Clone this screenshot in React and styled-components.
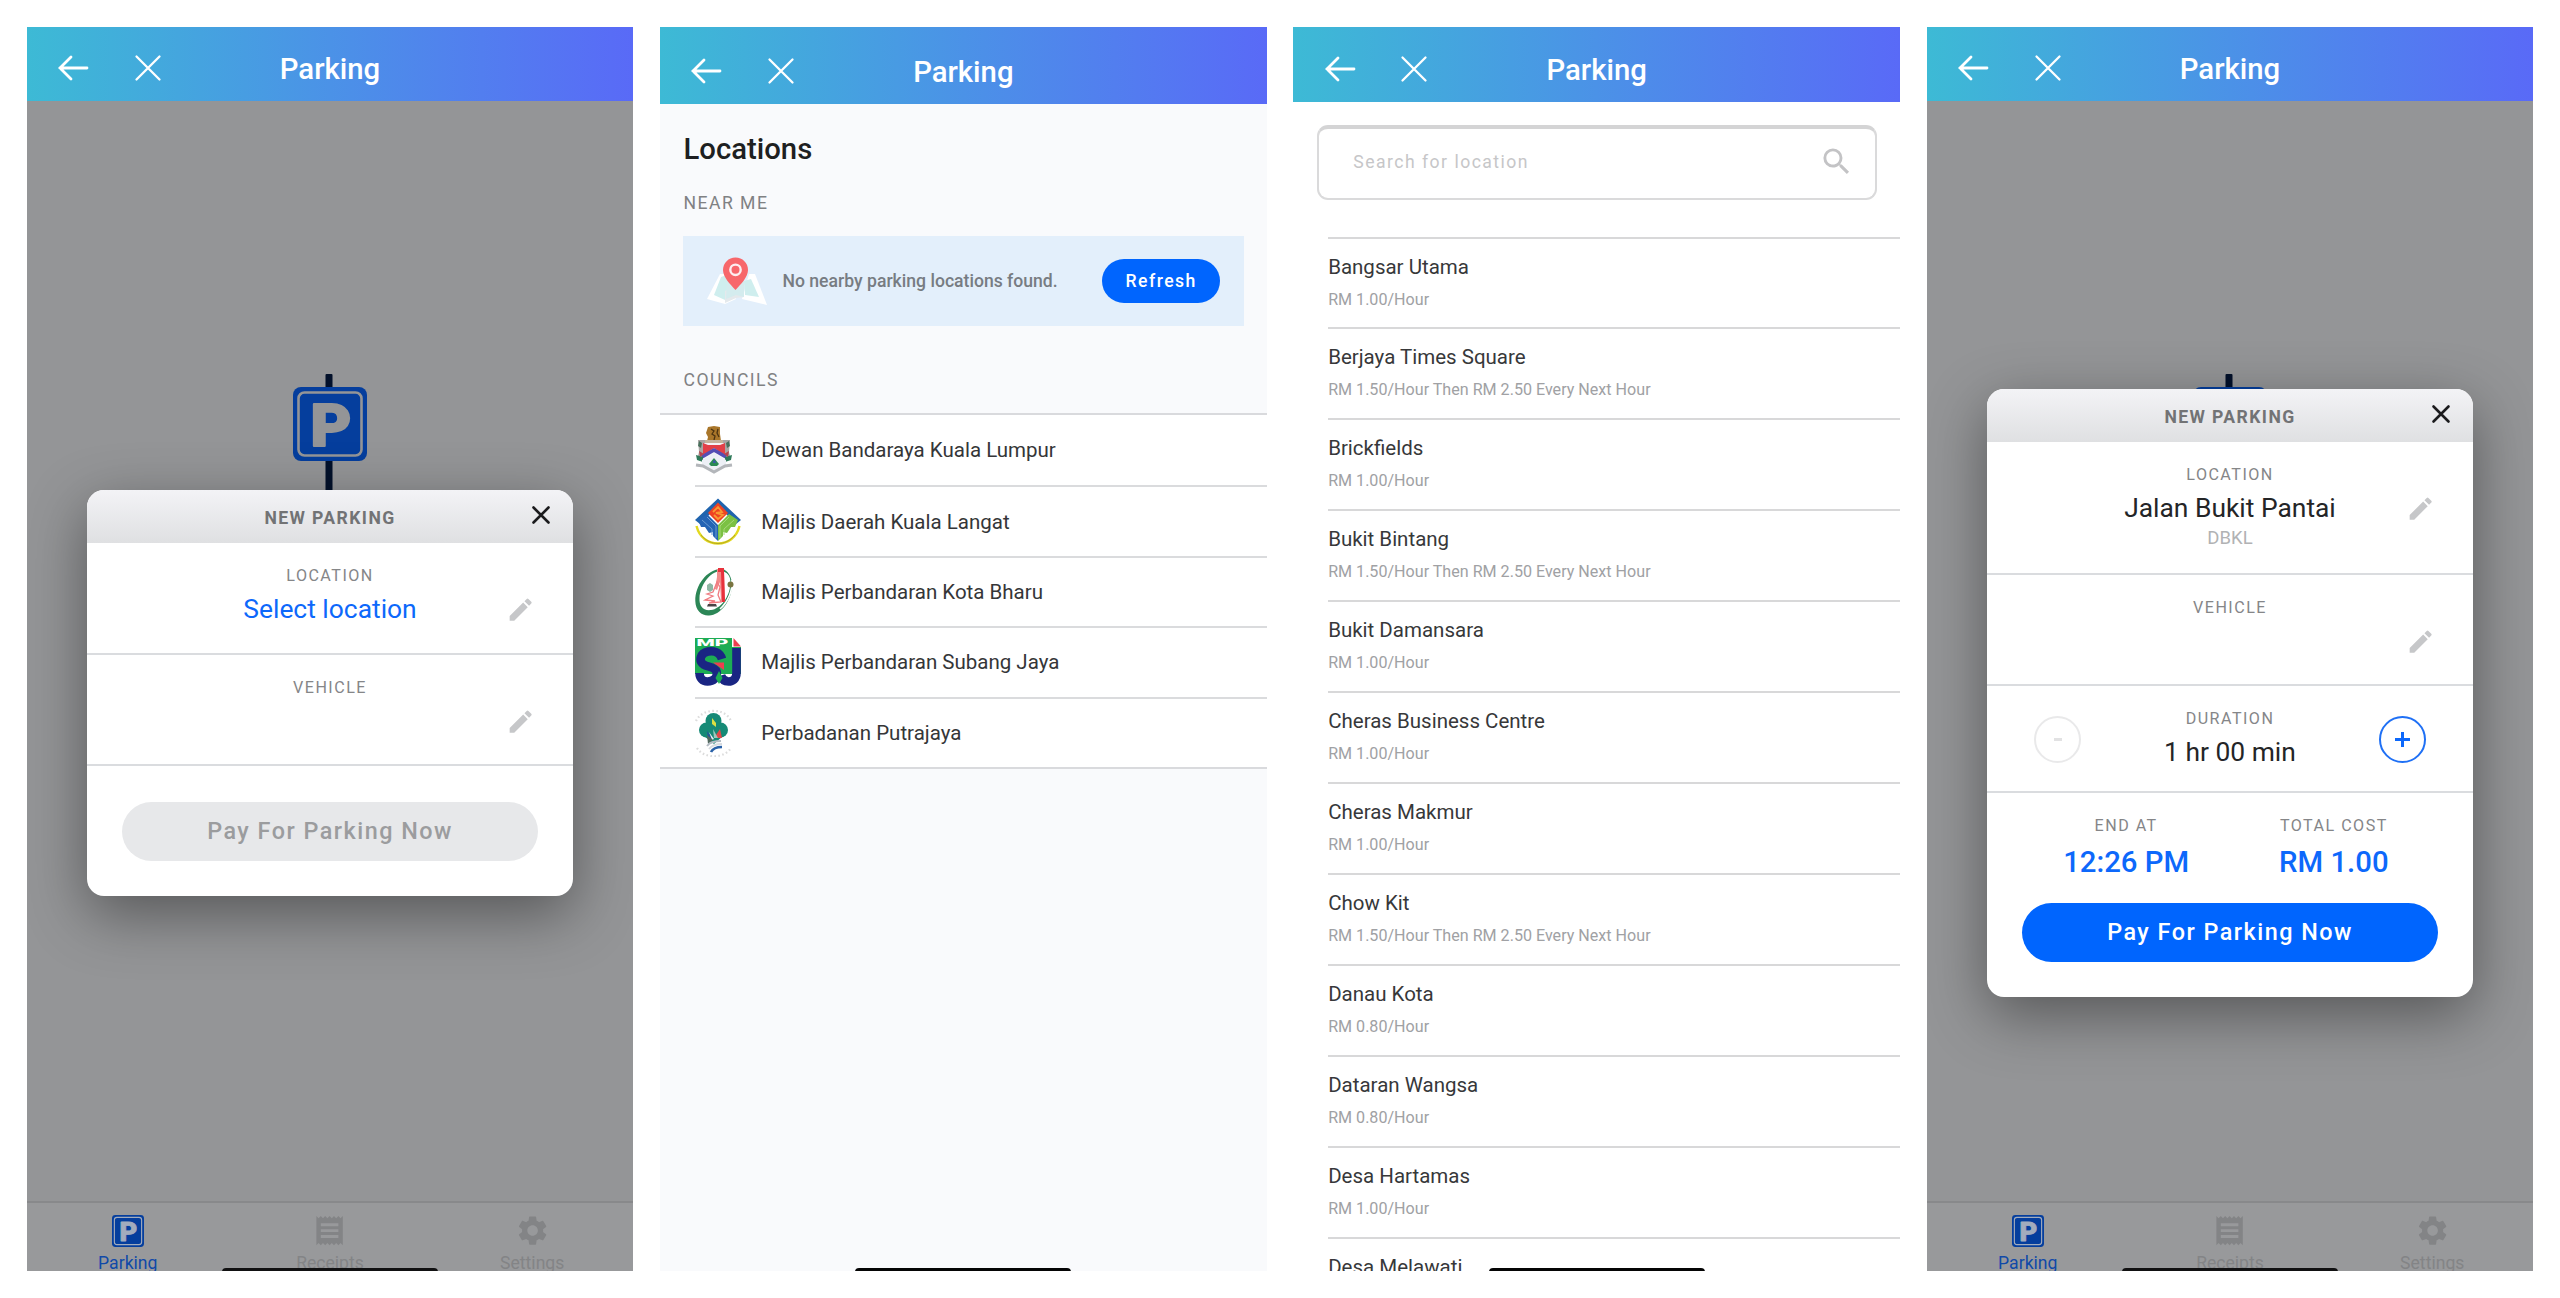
import React from "react";
import styled, { createGlobalStyle } from "styled-components";
import { MdEdit, MdReceipt, MdSearch, MdSettings } from "react-icons/md";

const GlobalStyle = createGlobalStyle`
  * {
    box-sizing: border-box;
  }
  body {
    margin: 0;
    background-color: #ffffff;
    font-family: Roboto, "Liberation Sans", sans-serif;
  }
`;

const Board = styled.div`
  display: grid;
  grid-template-columns: repeat(4, 1fr);
  gap: 26.67px;
  height: 1298px;
  padding: 27px 26.67px;
`;

const Screen = styled.div`
  position: relative;
  display: flex;
  flex-direction: column;
  height: 1244px;
  overflow: hidden;
  background-color: ${(props) => props.$bg};
`;

const HeaderBar = styled.div`
  display: flex;
  flex-shrink: 0;
  align-items: flex-end;
  height: ${(props) => props.$height}px;
  background: linear-gradient(90deg, #3dbad5 0%, #4b92e7 50%, #596af7 100%);
`;

const HeaderRow = styled.div`
  display: grid;
  grid-template-columns: 200px 1fr 200px;
  align-items: center;
  width: 100%;
  height: 65px;
`;

const HeaderIcons = styled.div`
  display: flex;
  gap: 44.5px;
  padding-left: 30.5px;
  padding-bottom: 2px;
`;

const HeaderTitle = styled.div`
  color: #ffffff;
  font-size: 29.3px;
  font-weight: 500;
  text-align: center;
`;

const HomeBar = styled.div`
  position: absolute;
  left: 195.5px;
  bottom: -5px;
  width: 216px;
  height: 8px;
  border-radius: 4px;
  background-color: ${(props) => (props.$dim ? "#111112" : "#050505")};
`;

const Label = styled.div`
  color: #858688;
  font-size: 16.1px;
  letter-spacing: 1.47px;
  line-height: 24px;
`;

/* parking home */

const SignArea = styled.div`
  display: flex;
  flex: 1;
  justify-content: center;
  padding-top: 273px;
`;

const TabBar = styled.div`
  display: grid;
  grid-template-columns: repeat(3, 1fr);
  height: 70px;
  border-top: 2px solid #88898b;
  background-color: #98999b;
`;

const Tab = styled.div`
  display: flex;
  flex-direction: column;
  align-items: center;
  padding-top: 9px;
  color: ${(props) => (props.$active ? "#1049a8" : "#838486")};
  font-size: 17.6px;
`;

const TabIcon = styled.div`
  display: flex;
  align-items: center;
  height: 37px;
  margin-bottom: 4px;
`;

/* new parking dialog */

const Overlay = styled.div`
  position: absolute;
  inset: 0;
  display: flex;
  align-items: center;
  justify-content: center;
  padding-top: 88px;
`;

const DialogBox = styled.div`
  width: 485.4px;
  border-radius: 17px;
  overflow: hidden;
  background-color: #ffffff;
  box-shadow: 0 18px 60px rgba(0, 0, 0, 0.42);
`;

const DialogHeader = styled.div`
  display: grid;
  grid-template-columns: 64px 1fr 64px;
  align-items: center;
  height: 53px;
  background: linear-gradient(180deg, #f3f3f6 0%, #dfe0e2 100%);
`;

const DialogTitle = styled.div`
  grid-column: 2;
  padding-top: 3px;
  color: #727375;
  font-size: 17.6px;
  font-weight: 700;
  letter-spacing: 1.4px;
  text-align: center;
`;

const DialogClose = styled.div`
  display: flex;
  justify-content: center;
  padding-bottom: 3px;
`;

const Section = styled.div`
  display: grid;
  grid-template-columns: 104px 1fr 104px;
  height: ${(props) => props.$height}px;
  padding-top: 21px;
  border-bottom: 2px solid #dadcdf;
  text-align: center;
`;

const SectionBody = styled.div`
  grid-column: 2;
  white-space: nowrap;
`;

const Value = styled.div`
  color: ${(props) => (props.$link ? "#0d68fb" : "#242527")};
  font-size: 26.4px;
  line-height: 42px;
`;

const Council = styled.div`
  color: #b1b2b4;
  font-size: 18.5px;
  line-height: 18px;
`;

const EditIcon = styled(MdEdit)`
  margin: 31px auto 0;
  color: #c6c7c9;
  font-size: 29.3px;
`;

const StepButton = styled.div`
  display: flex;
  align-items: center;
  justify-content: center;
  width: 47px;
  height: 47px;
  margin-top: 9px;
  margin-left: ${(props) => (props.$minus ? "47px" : "10px")};
  border: 2px solid ${(props) => (props.$minus ? "#e9e9ea" : "#1f70f5")};
  border-radius: 50%;
`;

const Summary = styled.div`
  display: grid;
  grid-template-columns: 1fr 1fr;
  padding: 21px 35px 17px;
  text-align: center;
`;

const SummaryValue = styled.div`
  color: #0d68fb;
  font-size: 29.3px;
  font-weight: 500;
  line-height: 48px;
`;

const PayButton = styled.div`
  height: 59px;
  margin: ${(props) => (props.$disabled ? "36px" : "0")} 35px 35px;
  border-radius: 30px;
  background-color: ${(props) => (props.$disabled ? "#e7e8ea" : "#0065fe")};
  color: ${(props) => (props.$disabled ? "#9b9c9e" : "#ffffff")};
  font-size: 23.4px;
  font-weight: 500;
  letter-spacing: 1.47px;
  line-height: 58px;
  text-align: center;
`;

/* locations */

const PageTitle = styled.div`
  margin: 27px 23.5px 0;
  color: #1e1f21;
  font-size: 29.3px;
  font-weight: 500;
  line-height: 36px;
`;

const GroupTitle = styled.div`
  margin: ${(props) => props.$top}px 23.5px 0;
  color: #808183;
  font-size: 17.6px;
  letter-spacing: 1.47px;
  line-height: 24px;
`;

const Notice = styled.div`
  display: flex;
  align-items: center;
  height: 90px;
  margin: 21px 23px 0 23.5px;
  padding: 0 23.5px 0 24px;
  background-color: #e3effb;
`;

const NoticeText = styled.div`
  flex: 1;
  margin-left: 15px;
  color: #777c82;
  font-size: 17.6px;
  font-weight: 500;
`;

const RefreshButton = styled.div`
  width: 118px;
  height: 44px;
  border-radius: 22px;
  background-color: #0065fe;
  color: #ffffff;
  font-size: 17.6px;
  font-weight: 500;
  letter-spacing: 1.47px;
  line-height: 44px;
  text-align: center;
`;

const CouncilList = styled.div`
  margin-top: 21px;
  padding-left: 35px;
  border-top: 2px solid #d9dadd;
  border-bottom: 2px solid #d9dadd;
  background-color: #ffffff;
`;

const CouncilRow = styled.div`
  display: flex;
  align-items: center;
  gap: 18.3px;
  height: 70.4px;
  color: #353638;
  font-size: 20.5px;
  & + & {
    border-top: 2px solid #dadbdd;
  }
  svg {
    flex-shrink: 0;
  }
`;

/* search */

const SearchBox = styled.div`
  display: flex;
  flex-shrink: 0;
  align-items: center;
  justify-content: space-between;
  height: 75px;
  margin: 23px 23.5px 36.5px;
  padding: 0 20.5px 3px 34.5px;
  border: 2px solid #dadadb;
  border-top: 4px solid #d4d4d5;
  border-radius: 11px;
  color: #c6c6c8;
  font-size: 17.6px;
  letter-spacing: 1.47px;
  svg {
    color: #c3c3c5;
    font-size: 35.2px;
  }
`;

const LocationRow = styled.div`
  flex-shrink: 0;
  height: 90.95px;
  margin-left: 34.8px;
  padding-top: 16px;
  border-top: 2px solid #d8d8d9;
`;

const LocationName = styled.div`
  color: #37383a;
  font-size: 20.5px;
  line-height: 24px;
`;

const LocationRate = styled.div`
  margin-top: 10px;
  color: #a0a1a4;
  font-size: 16.1px;
  line-height: 22px;
`;

const councils = [
  { name: "Dewan Bandaraya Kuala Lumpur", Logo: KualaLumpurLogo },
  { name: "Majlis Daerah Kuala Langat", Logo: KualaLangatLogo },
  { name: "Majlis Perbandaran Kota Bharu", Logo: KotaBharuLogo },
  { name: "Majlis Perbandaran Subang Jaya", Logo: SubangJayaLogo },
  { name: "Perbadanan Putrajaya", Logo: PutrajayaLogo },
];

const locations = [
  { name: "Bangsar Utama", rate: "RM 1.00/Hour" },
  { name: "Berjaya Times Square", rate: "RM 1.50/Hour Then RM 2.50 Every Next Hour" },
  { name: "Brickfields", rate: "RM 1.00/Hour" },
  { name: "Bukit Bintang", rate: "RM 1.50/Hour Then RM 2.50 Every Next Hour" },
  { name: "Bukit Damansara", rate: "RM 1.00/Hour" },
  { name: "Cheras Business Centre", rate: "RM 1.00/Hour" },
  { name: "Cheras Makmur", rate: "RM 1.00/Hour" },
  { name: "Chow Kit", rate: "RM 1.50/Hour Then RM 2.50 Every Next Hour" },
  { name: "Danau Kota", rate: "RM 0.80/Hour" },
  { name: "Dataran Wangsa", rate: "RM 0.80/Hour" },
  { name: "Desa Hartamas", rate: "RM 1.00/Hour" },
  { name: "Desa Melawati", rate: "RM 1.00/Hour" },
];

function KualaLumpurLogo() {
  return (
    <svg width="48" height="48" viewBox="0 0 48 48">
      <path d="M13 1l6-1 6 1v7l1 7H12l1-4-2-4z" fill="#a9762a" />
      <path d="M16 3l3 2-2 3 3 2-1 4M23 3l-1 4 2 4" fill="none" stroke="#4d3311" strokeWidth="1.300" />
      <path d="M10 14h18v3H10z" fill="#c4b29c" />
      <path d="M3 14h7v9l-1 8-7 3 2-8zM35 14h-7v9l1 8 7 3-2-8z" fill="#aaa6a5" />
      <path d="M4 15l3 2-1 5-3-2zM34 15l-3 2 1 5 3-2z" fill="#49705c" />
      <path d="M9 17h20v14l-10 7-10-7z" fill="#f4f4f8" />
      <path d="M8 17l5 2h12l5-2v13L19 22 8 30z" fill="#e24048" />
      <path d="M7 31l12-7 12 7" fill="none" stroke="#544eb4" strokeWidth="3.600" />
      <path d="M1 29l7 2v5l-6-2zM37 29l-7 2v5l6-2z" fill="#2f7a5a" />
      <path d="M4 25l5 3-4 3zM34 25l-5 3 4 3z" fill="#b8434c" />
      <path d="M7 34l12-7 12 7v5l-12 7-12-7z" fill="#edf0f6" />
      <path d="M14 38l5-6 5 6-2 2h-6z" fill="#2c8a55" />
      <path d="M18 35l2-1 1 3h-3z" fill="#3b58a8" />
      <path d="M1 39l7 1 11 6 11-6 7-1" fill="none" stroke="#b3b6ba" strokeWidth="3" />
    </svg>
  );
}

function KualaLangatLogo() {
  return (
    <svg width="48" height="48" viewBox="0 0 48 48">
      <path d="M23 .5L46 22l-5 4-18-18L5 26l-5-4z" fill="#1f64ae" />
      <path d="M23 4.500l10 10.500-10 10-10-10z" fill="#ee4323" />
      <path d="M18 14l5-5 4 5-6 1 7 2-5 4-4-4" fill="none" stroke="#f89a32" strokeWidth="1.800" />
      <path d="M3 22l9-6 11 11v16l-5-5V34l-4 1-4-6-4 0z" fill="#2464b4" />
      <path d="M43 22l-9-6-11 11v16l5-5V34l4 1 4-6 4 0z" fill="#7bc143" />
      <path d="M7 22l10 9v6M12 19l9 9v12" fill="none" stroke="#6b9bd0" strokeWidth="1" />
      <path d="M39 22l-10 9v6M34 19l-9 9v12" fill="none" stroke="#a6d878" strokeWidth="1" />
      <path d="M1.500 28c3 12 12 17.500 21.500 17.500S41.500 40 44.500 28" fill="none" stroke="#e3d91f" strokeWidth="2.400" />
      <path d="M6 37c5 6 11 8.500 17 8.500S35 43 40 37" fill="none" stroke="#b5a824" strokeWidth="1" />
    </svg>
  );
}

function KotaBharuLogo() {
  return (
    <svg width="48" height="48" viewBox="0 0 48 48">
      <path
        fillRule="evenodd"
        d="M25 1C12 2 0 17 .3 33 .5 43 7 48 14 47.500 26 47 37 32 37 17 37 9 33 3 28 1zM25 3c7 0 11 5 10.500 13-1 13-10 25-19.500 26C8 43 4 38 4.500 30 5 17 15 4 25 3z"
        fill="#2c8656"
      />
      <path d="M37 12c1 10-4 22-12 29" fill="none" stroke="#ffffff" strokeWidth="1.600" />
      <path d="M22 1h7l1 33h-4l-1-20-3 8-2-1 2-12z" fill="#f28a8a" />
      <path d="M23 0h6v4h-6zM26 4h3l1 30h-3z" fill="#e8323c" />
      <path d="M22 14l-4 10-6 2 6 2-8 4 10 1-6 2 12-1-3-7 2-8z" fill="none" stroke="#ef7b80" strokeWidth="1.300" />
      <path d="M12 17l3-2 3 2v5l-3 2-3-2z" fill="#8fb7a4" />
      <path d="M13 36h8l1 2.500H12z" fill="#4a4446" />
      <circle cx="35.500" cy="16.500" r="3" fill="#7a7440" />
    </svg>
  );
}

const LogoText = styled.text`
  fill: #ffffff;
  font-family: Roboto, sans-serif;
  font-size: 8.5px;
  font-weight: 900;
`;

function SubangJayaLogo() {
  return (
    <svg width="48" height="48" viewBox="0 0 48 48">
      <path d="M0 0h37v9h9v27H0z" fill="#1dac54" />
      <path d="M38.500 0l7.500 8.500h-7.500z" fill="#ee3e50" />
      <path
        d="M27 21C25 14 18 12.500 13 13.500 5 15 3.500 23 8.500 26.500c4 3 11 1.500 13 7C23 40 18 43.500 12.500 43.500 7.500 43.500 4.500 40 4.500 35"
        fill="none"
        stroke="#1a2583"
        strokeWidth="8.600"
      />
      <path d="M41.500 10V35c0 6-4 8.500-8 8.500-4 0-6.500-2.500-7.500-6" fill="none" stroke="#1a2583" strokeWidth="8.600" />
      <path d="M24 33l3.500 7-3.500 6-3.500-6z" fill="#1dac54" />
      <path d="M18 24.500h11v7.500z" fill="#ee3e50" />
      <LogoText x="1.500" y="8" textLength="32" lengthAdjust="spacingAndGlyphs">
        MP
      </LogoText>
    </svg>
  );
}

function PutrajayaLogo() {
  return (
    <svg width="48" height="48" viewBox="0 0 48 48">
      <path d="M1 12C7-1 30-2 36 12" fill="none" stroke="#dcdcdc" strokeWidth="2.200" strokeDasharray="1.600 2.400" />
      <path d="M2 39c7 11 27 11 34 0" fill="none" stroke="#dcdcdc" strokeWidth="2.200" strokeDasharray="1.600 2.400" />
      <circle cx="18.500" cy="12" r="8" fill="#168a76" />
      <circle cx="11.500" cy="21" r="7.500" fill="#168a76" />
      <circle cx="25.500" cy="21" r="7.500" fill="#168a76" />
      <path d="M9 27l9-17 10 17-9 8z" fill="#168a76" />
      <path d="M17 9l4 5v4l-4-3z" fill="#dbe043" />
      <path d="M12 22l1 8h5z" fill="#27539b" />
      <path d="M14 23l5 7-2 1z" fill="#e5eef0" />
      <path d="M25 20l2 9h-8z" fill="#dd4a4a" />
      <path d="M18 20l5 9h-4z" fill="#9cc7bd" />
      <path d="M12 26l6 5-5 4z" fill="#52695f" />
      <path d="M12 37c3-4 7-5 14-5" fill="none" stroke="#b4bcc4" strokeWidth="2" />
      <path d="M14 40c3-4 7-5 13-5" fill="none" stroke="#d7dbdf" strokeWidth="1.800" />
      <path d="M16 43c2-4 6-5 11-5" fill="none" stroke="#2a62a8" strokeWidth="2.600" />
    </svg>
  );
}

function MapPin() {
  return (
    <svg width="60" height="49" viewBox="0 0 60 49">
      <path d="M13 17h7l9 25-11 5L0 42z" fill="#ffffff" />
      <path d="M48 17h-6l-7 25 25 6z" fill="#ffffff" />
      <path d="M14 20l6-2 8 22-10 3-11-5z" fill="#cfeeee" />
      <path d="M18 34l11-6 8 12-8 1-11 5z" fill="#e4e9ec" />
      <path d="M20 22l17-2v20l-8-2-10 4z" fill="#d4ecee" />
      <path d="M37 24l7-2 8 18-14-2z" fill="#cfeeee" />
      <path
        d="M28.500.500c7 0 12.500 5.500 12.500 12.500 0 7-7 14-12.500 20C23 27 16 20 16 13 16 6 21.500.500 28.500.500z"
        fill="#f7676b"
      />
      <circle cx="28.500" cy="12.800" r="5.200" fill="none" stroke="#fdeef0" strokeWidth="2.400" />
    </svg>
  );
}

const SignLetter = styled.text`
  fill: ${(props) => props.$color};
  stroke: ${(props) => props.$color};
  stroke-width: 2px;
  stroke-linejoin: round;
  font-family: Roboto, sans-serif;
  font-size: 60px;
  font-weight: 900;
`;

function ParkingPlate({ ring, blank }) {
  return (
    <>
      <rect x="0" y="0" width="74" height="74" rx="8" fill="#053e9d" />
      <rect x="5.500" y="5.500" width="63" height="63" rx="6" fill="none" stroke={ring} strokeWidth="2.600" />
      {!blank && (
        <SignLetter $color={ring} x="17.500" y="59" textLength="41" lengthAdjust="spacingAndGlyphs">
          P
        </SignLetter>
      )}
    </>
  );
}

function ParkingSign({ blank }) {
  return (
    <svg width="74" height="160" viewBox="0 0 74 160">
      <rect x="32.500" y="0" width="7" height="160" rx="1" fill="#03112b" />
      <g transform="translate(0 13)">
        <ParkingPlate ring="#949597" blank={blank} />
      </g>
    </svg>
  );
}

function Header({ height }) {
  return (
    <HeaderBar $height={height}>
      <HeaderRow>
        <HeaderIcons>
          <svg width="32" height="28" viewBox="0 0 32 28" fill="none" stroke="#ffffff" strokeWidth="2.800" strokeLinecap="round">
            <path d="M3 14h27M14 3L3 14l11 11" />
          </svg>
          <svg width="28" height="28" viewBox="0 0 28 28" fill="none" stroke="#ffffff" strokeWidth="2.300" strokeLinecap="round">
            <path d="M2.500 2.500l23 23M25.500 2.500l-23 23" />
          </svg>
        </HeaderIcons>
        <HeaderTitle>Parking</HeaderTitle>
      </HeaderRow>
    </HeaderBar>
  );
}

function Dialog({ children }) {
  return (
    <Overlay>
      <DialogBox>
        <DialogHeader>
          <DialogTitle>NEW PARKING</DialogTitle>
          <DialogClose>
            <svg width="20" height="20" viewBox="0 0 20 20" fill="none" stroke="#1b1b1d" strokeWidth="2.600" strokeLinecap="round">
              <path d="M2.500 2.500l15 15M17.500 2.500l-15 15" />
            </svg>
          </DialogClose>
        </DialogHeader>
        {children}
      </DialogBox>
    </Overlay>
  );
}

// blankSign leaves the letter off the plate when the dialog covers it
function ParkingScreen({ children, blankSign }) {
  return (
    <Screen $bg="#949597">
      <Header height={74} />
      <SignArea>
        <ParkingSign blank={blankSign} />
      </SignArea>
      <TabBar>
        <Tab $active>
          <TabIcon>
            <svg width="32" height="32" viewBox="0 0 74 74">
              <ParkingPlate ring="#a2acbd" />
            </svg>
          </TabIcon>
          Parking
        </Tab>
        <Tab>
          <TabIcon>
            <MdReceipt size={35.2} />
          </TabIcon>
          Receipts
        </Tab>
        <Tab>
          <TabIcon>
            <MdSettings size={35.2} />
          </TabIcon>
          Settings
        </Tab>
      </TabBar>
      {children}
      <HomeBar $dim />
    </Screen>
  );
}

function LocationsScreen() {
  return (
    <Screen $bg="#f9fafc">
      <Header height={77} />
      <PageTitle>Locations</PageTitle>
      <GroupTitle $top={24}>NEAR ME</GroupTitle>
      <Notice>
        <MapPin />
        <NoticeText>No nearby parking locations found.</NoticeText>
        <RefreshButton>Refresh</RefreshButton>
      </Notice>
      <GroupTitle $top={42}>COUNCILS</GroupTitle>
      <CouncilList>
        {councils.map(({ name, Logo }) => (
          <CouncilRow key={name}>
            <Logo />
            {name}
          </CouncilRow>
        ))}
      </CouncilList>
      <HomeBar />
    </Screen>
  );
}

function SearchScreen() {
  return (
    <Screen $bg="#ffffff">
      <Header height={75} />
      <SearchBox>
        Search for location
        <MdSearch />
      </SearchBox>
      {locations.map((location) => (
        <LocationRow key={location.name}>
          <LocationName>{location.name}</LocationName>
          <LocationRate>{location.rate}</LocationRate>
        </LocationRow>
      ))}
      <HomeBar />
    </Screen>
  );
}

const App = () => {
  return (
    <>
      <GlobalStyle />
      <Board>
        <ParkingScreen>
          <Dialog>
            <Section $height={112}>
              <SectionBody>
                <Label>LOCATION</Label>
                <Value $link>Select location</Value>
              </SectionBody>
              <EditIcon />
            </Section>
            <Section $height={111}>
              <SectionBody>
                <Label>VEHICLE</Label>
              </SectionBody>
              <EditIcon />
            </Section>
            <PayButton $disabled>Pay For Parking Now</PayButton>
          </Dialog>
        </ParkingScreen>
        <LocationsScreen />
        <SearchScreen />
        <ParkingScreen blankSign>
          <Dialog>
            <Section $height={133}>
              <SectionBody>
                <Label>LOCATION</Label>
                <Value>Jalan Bukit Pantai</Value>
                <Council>DBKL</Council>
              </SectionBody>
              <EditIcon />
            </Section>
            <Section $height={111}>
              <SectionBody>
                <Label>VEHICLE</Label>
              </SectionBody>
              <EditIcon />
            </Section>
            <Section $height={107}>
              <StepButton $minus>
                <svg width="8" height="3">
                  <rect width="8" height="3" fill="#e2e2e3" />
                </svg>
              </StepButton>
              <SectionBody>
                <Label>DURATION</Label>
                <Value>1 hr 00 min</Value>
              </SectionBody>
              <StepButton>
                <svg width="15" height="15" stroke="#0d68fb" strokeWidth="3">
                  <path d="M7.500 0v15M0 7.500h15" />
                </svg>
              </StepButton>
            </Section>
            <Summary>
              <div>
                <Label>END AT</Label>
                <SummaryValue>12:26 PM</SummaryValue>
              </div>
              <div>
                <Label>TOTAL COST</Label>
                <SummaryValue>RM 1.00</SummaryValue>
              </div>
            </Summary>
            <PayButton>Pay For Parking Now</PayButton>
          </Dialog>
        </ParkingScreen>
      </Board>
    </>
  );
};

export default App;
